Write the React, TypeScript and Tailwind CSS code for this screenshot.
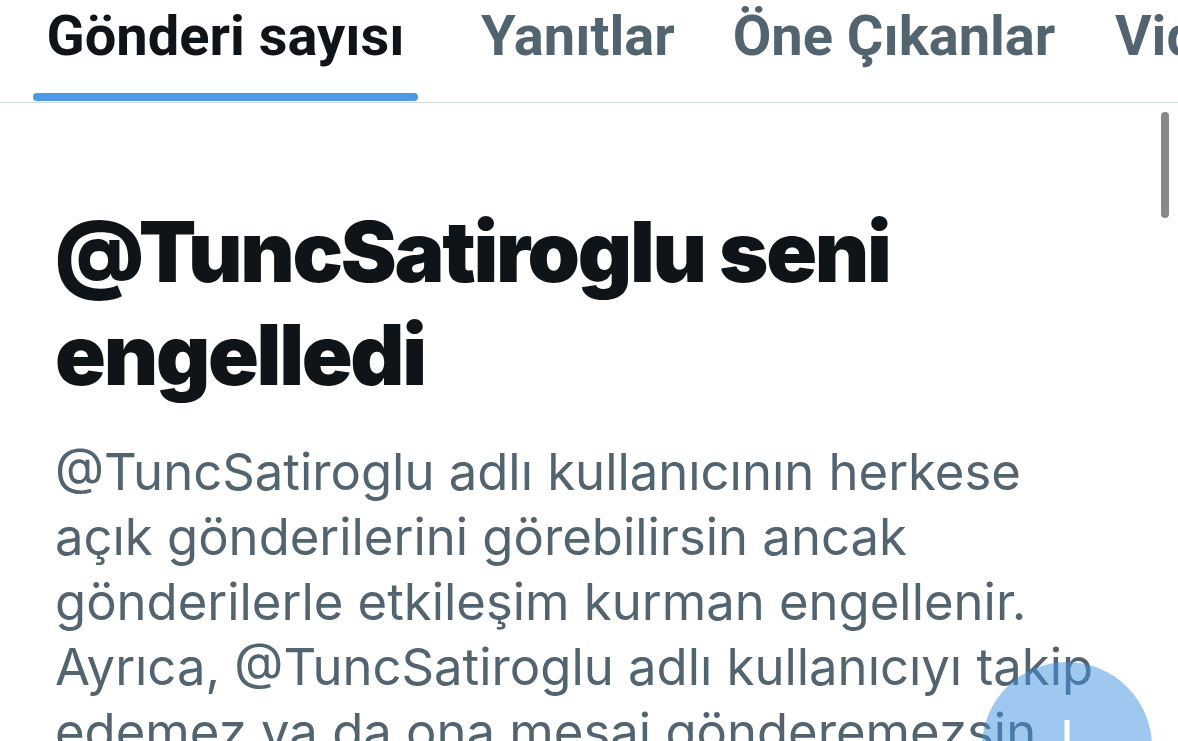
export default function App() {
  const tabFont = { fontFamily: 'Roboto, "Liberation Sans", sans-serif' }
  const chirp = { fontFamily: 'Inter, "Noto Sans", sans-serif' }

  const body = [
    '@TuncSatiroglu adlı kullanıcının herkese',
    'açık gönderilerini görebilirsin ancak',
    'gönderilerle etkileşim kurman engellenir.',
    'Ayrıca, @TuncSatiroglu adlı kullanıcıyı takip',
    'edemez ya da ona mesaj gönderemezsin.',
  ]

  return (
    <div className="relative w-[1178px] h-[741px] overflow-hidden bg-white">
      {/* tabs */}
      <div
        className="flex items-start h-[103px] border-b border-[#cfd9de] pl-[33px] whitespace-nowrap"
        style={tabFont}
      >
        <div className="w-[385px] shrink-0 flex flex-col items-center">
          <span className="mt-[3px] text-[56px] leading-[66px] font-bold text-[#0f1419]">
            Gönderi sayısı
          </span>
          <div className="mt-[24px] h-[8px] w-full rounded-full bg-[#4a9ae8]" />
        </div>
        <span className="ml-[63px] w-[192px] shrink-0 text-center mt-[3px] text-[56px] leading-[66px] font-bold text-[#536471]">
          Yanıtlar
        </span>
        <span className="ml-[58px] w-[326px] shrink-0 text-center mt-[3px] text-[56px] leading-[66px] font-bold text-[#536471]">
          Öne Çıkanlar
        </span>
        <span className="ml-[58px] shrink-0 mt-[3px] text-[56px] leading-[66px] font-bold text-[#536471]">
          Videolar
        </span>
      </div>

      {/* blocked notice */}
      <div className="pl-[55px] pt-[97px] whitespace-nowrap" style={chirp}>
        <h1 className="text-[84px] leading-[103px] font-black tracking-[-2.3px] text-[#0f1419]">
          @TuncSatiroglu seni
          <br />
          engelledi
        </h1>
        <div className="mt-[33px] text-[50.8px] leading-[65px] text-[#536471]">
          {body.map((line) => (
            <div key={line}>{line}</div>
          ))}
        </div>
      </div>

      {/* scrollbar */}
      <div className="absolute left-[1161px] top-[112px] w-[8px] h-[106px] rounded-full bg-[#888888]" />

      {/* compose button */}
      <div className="absolute left-[982px] top-[662px] w-[170px] h-[170px] rounded-full bg-[#3d91df]/50">
        <svg
          className="absolute left-[55px] top-[58px]"
          width="60"
          height="60"
          viewBox="0 0 60 60"
        >
          <path d="M30 0v60M0 30h60" stroke="white" strokeWidth="5" />
        </svg>
      </div>
    </div>
  )
}
